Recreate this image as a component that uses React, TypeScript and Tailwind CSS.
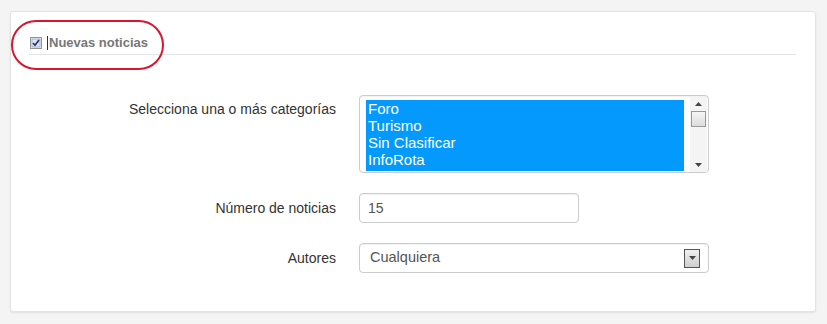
import React from "react";

const CATEGORIES = ["Foro", "Turismo", "Sin Clasificar", "InfoRota"];

function CheckIcon() {
  return (
    <svg width="12" height="12" viewBox="0 0 12 12" className="shrink-0">
      <rect x="0.5" y="0.5" width="11" height="11" fill="#e8ecf4" stroke="#333" strokeDasharray="1 1" />
      <rect x="2" y="2" width="8" height="8" fill="#dfe5f0" stroke="#8c99b0" strokeWidth="0.6" />
      <path d="M3 6 L5 8.2 L9 3" fill="none" stroke="#1c2f6b" strokeWidth="1.6" />
    </svg>
  );
}

function ArrowUp() {
  return (
    <svg width="7" height="4" viewBox="0 0 7 4">
      <path d="M0 4 L3.5 0 L7 4 Z" fill="#444" />
    </svg>
  );
}

function ArrowDown() {
  return (
    <svg width="7" height="4" viewBox="0 0 7 4">
      <path d="M0 0 L7 0 L3.5 4 Z" fill="#444" />
    </svg>
  );
}

export default function App() {
  return (
    <div
      className="w-[827px] h-[324px] bg-[#f4f4f4] pt-[11px] pl-[10px]"
      style={{ fontFamily: '"Liberation Sans", Arial, sans-serif' }}
    >
      <div className="relative w-[806px] h-[301px] bg-white border border-[#e3e3e3] rounded-[3px] shadow-[0_1px_2px_rgba(0,0,0,0.08)] px-[18px]">
        {/* Header */}
        <div className="h-[43px] flex items-end pb-[3px] pl-[1px] border-b border-[#e5e5e5] mr-[1px]">
          <div className="flex items-center gap-[5px]">
            <CheckIcon />
            <span className="w-px h-[14px] bg-[#333]" />
            <span className="text-[13px] font-bold text-[#777] leading-[16px] -ml-[4px]">Nuevas noticias</span>
          </div>
        </div>

        {/* annotation ellipse */}
        <div className="absolute left-[0px] top-[8px] w-[153px] h-[50px] rounded-full border-[2.5px] border-[#d8172f]" />

        {/* Form */}
        <div className="pt-[40px] flex flex-col gap-[20px]">
          <div className="flex">
            <label className="w-[307px] text-right text-[14px] text-[#333] leading-[16px] pt-[6px]">
              Selecciona una o más categorías
            </label>
            <div className="ml-[23px] w-[350px] h-[78px] border border-[#ccc] rounded-[4px] flex pl-[6px] pr-[1px] py-[4px] shadow-[inset_0_1px_1px_rgba(0,0,0,0.06)]">
              <div className="w-[319px] h-[71px] bg-[#0399fd] text-white text-[15px] leading-[17px] pl-[2px] overflow-hidden">
                {CATEGORIES.map((c) => (
                  <div key={c}>{c}</div>
                ))}
              </div>
              <div className="ml-[6px] w-[17px] -mt-[3px] h-[75px] bg-[#f4f4f4] flex flex-col items-center">
                <div className="h-[14px] flex items-center">
                  <ArrowUp />
                </div>
                <div className="w-[15px] h-[16px] border border-[#999] bg-gradient-to-b from-[#f5f5f5] to-[#dcdcdc]" />
                <div className="flex-1" />
                <div className="h-[14px] flex items-center">
                  <ArrowDown />
                </div>
              </div>
            </div>
          </div>

          <div className="flex items-center">
            <label className="w-[307px] text-right text-[14px] text-[#333] leading-[16px]">Número de noticias</label>
            <div className="ml-[23px] w-[220px] h-[30px] border border-[#ccc] rounded-[4px] flex items-center pl-[8px] text-[14px] text-[#555] shadow-[inset_0_1px_1px_rgba(0,0,0,0.06)]">
              15
            </div>
          </div>

          <div className="flex items-center">
            <label className="w-[307px] text-right text-[14px] text-[#333] leading-[16px]">Autores</label>
            <div className="ml-[23px] w-[350px] h-[30px] border border-[#ccc] rounded-[4px] flex items-center pl-[10px] pr-[8px] text-[14.5px] text-[#555] shadow-[inset_0_1px_1px_rgba(0,0,0,0.06)]">
              <span className="flex-1">Cualquiera</span>
              <div className="w-[16px] h-[19px] border border-[#555] bg-gradient-to-b from-[#f0f0f0] to-[#cfcfcf] flex items-center justify-center">
                <ArrowDown />
              </div>
            </div>
          </div>
        </div>
      </div>
    </div>
  );
}
